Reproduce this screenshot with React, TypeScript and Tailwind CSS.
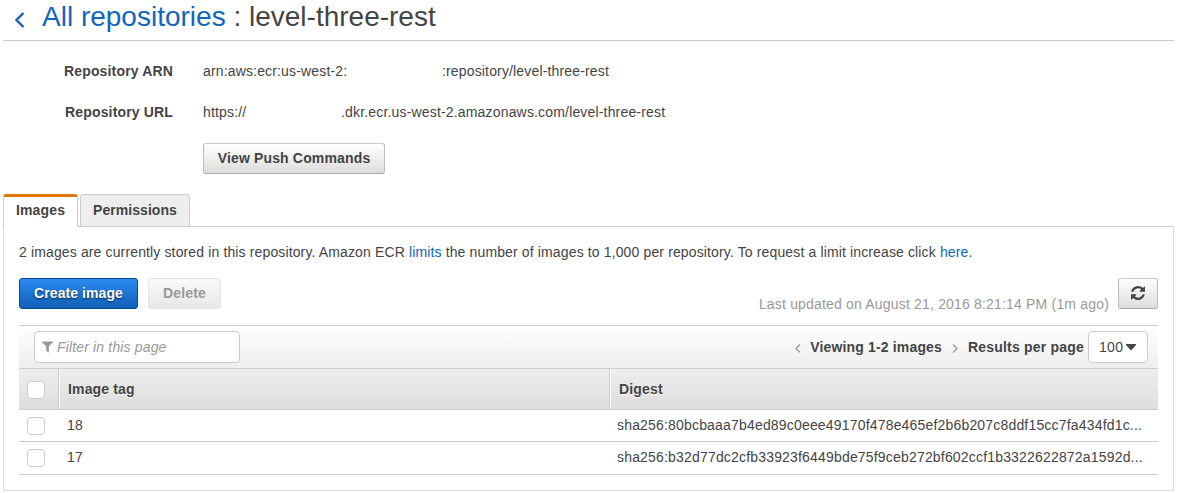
import type { ReactNode } from "react";

const rows = [
  { tag: "18", digest: "sha256:80bcbaaa7b4ed89c0eee49170f478e465ef2b6b207c8ddf15cc7fa434fd1c..." },
  { tag: "17", digest: "sha256:b32d77dc2cfb33923f6449bde75f9ceb272bf602ccf1b3322622872a1592d..." },
];

function Chevron({ className, flip = false }: { className: string; flip?: boolean }) {
  return (
    <svg viewBox="0 0 10 16" className={className} fill="none" stroke="currentColor">
      <path d={flip ? "M1.5 1l7 7-7 7" : "M8.5 1l-7 7 7 7"} />
    </svg>
  );
}

function RefreshIcon() {
  return (
    <svg viewBox="0 0 1536 1536" className="mb-[2px] h-[14px] w-[14px]" fill="currentColor">
      <path d="M1511 928q0 5-1 7-64 268-268 434.500T764 1536q-146 0-282.500-55T238 1324l-129 129q-19 19-45 19t-45-19-19-45V960q0-26 19-45t45-19h448q26 0 45 19t19 45-19 45l-137 137q71 66 161 102t187 36q134 0 250-65t186-179q11-17 53-117 8-23 30-23h192q13 0 22.500 9.500t9.500 22.500zm25-800v448q0 26-19 45t-45 19h-448q-26 0-45-19t-19-45 19-45l138-138Q969 256 768 256q-134 0-250 65T332 500q-11 17-53 117-8 23-30 23H50q-13 0-22.500-9.500T18 608v-7q65-268 270-434.500T768 0q146 0 284 55.500T1297 212l130-129q19-19 45-19t45 19 19 45z" />
    </svg>
  );
}

function FilterIcon() {
  return (
    <svg viewBox="0 0 12 12" className="mr-[4px] h-[12px] w-[11px]" fill="currentColor">
      <path d="M.4 0h11.200q.6.500.1 1L7.500 5.300v6.200q-.3.700-.9.300L4.700 10q-.2-.2-.2-.5V5.300L.3 1Q-.1.500.4 0z" />
    </svg>
  );
}

function Checkbox() {
  return <span role="checkbox" aria-checked="false" className="block h-[18px] w-[18px] rounded border border-[#ccc] bg-white" />;
}

function Detail({ label, children }: { label: string; children: ReactNode }) {
  return (
    <div className="flex h-[41px] items-center">
      <div className="w-[170px] text-right font-bold">{label}</div>
      <div className="ml-[30px] flex whitespace-pre">{children}</div>
    </div>
  );
}

export default function App() {
  return (
    <div className="h-[493px] w-[1179px] overflow-hidden bg-white pl-[3px] font-['Liberation_Sans',Arial,sans-serif] text-[14px] leading-5 tracking-[0.155px] text-[#444]">
      <header className="flex h-[41px] w-[1171px] border-b border-[#ccc] pl-[12px]">
        <Chevron className="mt-[12px] h-[16px] w-[10px] stroke-[2.3px] text-[#1166bb]" />
        <h1 className="ml-[17px] text-[28px] leading-[33px] tracking-normal whitespace-pre">
          <a className="text-[#1166bb]">All repositories</a> : level-three-rest
        </h1>
      </header>

      <section className="pt-[9px]">
        <Detail label="Repository ARN">
          <span className="w-[239px]">arn:aws:ecr:us-west-2:</span>
          <span>:repository/level-three-rest</span>
        </Detail>
        <Detail label="Repository URL">
          <span className="w-[138px]">https://</span>
          <span className="tracking-[0.17px]">.dkr.ecr.us-west-2.amazonaws.com/level-three-rest</span>
        </Detail>
        <button className="mt-[11px] ml-[200px] flex h-[31px] w-[182px] justify-center rounded-[3px] border border-[#bbb] border-t-[#ccc] border-b-[#aaa] bg-linear-to-b from-white to-[#ddd] pt-1 font-bold">
          View Push Commands
        </button>
      </section>

      <nav className="relative mt-5 -mb-px flex gap-[2px]">
        <div className="h-[33px] w-[75px] rounded-t-[3px] border-x border-t-[3px] border-[#ccc] border-t-[#e07700] bg-white pt-[3px] text-center font-bold">Images</div>
        <div className="h-[33px] w-[110px] rounded-t-[3px] border border-[#ccc] bg-[#eee] pt-[5px] text-center font-bold tracking-[0.05px]">Permissions</div>
      </nav>

      <main className="h-[265px] w-[1171px] border border-[#ddd] border-t-[#ccc] px-[15px] pt-[15px]">
        <p className="tracking-[0.134px] whitespace-nowrap">
          2 images are currently stored in this repository. Amazon ECR <a className="text-[#1166bb]">limits</a> the number of images to 1,000 per repository. To request a limit increase click <a className="text-[#1166bb]">here</a>.
        </p>
        <div className="mt-4 flex h-[47px] items-start">
          <button className="flex h-[31px] w-[119px] justify-center rounded-[3px] border border-[#0a4a8a] bg-linear-to-b from-[#2b8af0] to-[#1160b8] pt-1 font-bold tracking-[0.08px] text-white [text-shadow:0_1px_2px_#000a]">Create image</button>
          <button className="ml-[10px] flex h-[31px] w-[73px] justify-center rounded-[3px] border border-[#e4e4e4] bg-linear-to-b from-[#fafafa] to-[#e8e8e8] pt-1 font-bold text-[#999]">Delete</button>
          <span className="mt-4 mr-[9px] ml-auto tracking-[0.18px] text-[#999]">Last updated on August 21, 2016 8:21:14 PM (1m ago)</span>
          <button aria-label="Refresh" className="flex h-[31px] w-[40px] items-center justify-center rounded-[3px] border border-[#bbb] border-t-[#ccc] border-b-[#aaa] bg-linear-to-b from-white to-[#ddd]">
            <RefreshIcon />
          </button>
        </div>

        <div className="flex h-[44px] items-center border-y border-[#ccc] bg-linear-to-b from-white to-[#eee] pr-[10px] pl-[15px]">
          <div className="flex h-[32px] w-[206px] items-center rounded border border-[#ccc] bg-white pl-[7px] text-[#999] italic">
            <FilterIcon />
            Filter in this page
          </div>
          <Chevron className="mt-[3px] ml-auto h-[9px] w-[6px] stroke-[2.3px] text-[#999]" />
          <span className="ml-[9px] font-bold">Viewing 1-2 images</span>
          <Chevron flip className="mt-[3px] ml-[10px] h-[9px] w-[6px] stroke-[2.3px] text-[#999]" />
          <span className="ml-[10px] font-bold tracking-[0.2px]">Results per page</span>
          <div className="ml-[4px] flex h-[32px] w-[60px] items-center rounded border border-[#ccc] bg-white pl-[10px] tracking-[0.3px]">
            100
            <svg viewBox="0 0 10 6" className="ml-[3px] h-[6px] w-[10px]" fill="currentColor"><path d="M0 0h10v1L5.500 6h-1L0 1z" /></svg>
          </div>
        </div>

        <div className="flex h-[41px] items-stretch border-b border-[#ccc] bg-linear-to-b from-[#eee] to-[#ddd] font-bold [text-shadow:0_1px_0_#fff]">
          <div className="flex w-[40px] items-center border-r border-[#ccc] pt-[2px] pl-[8px]"><Checkbox /></div>
          <div className="flex w-[551px] items-center border-r border-l border-r-[#ccc] border-l-white pl-[8px]">Image tag</div>
          <div className="flex flex-1 items-center border-l border-white pl-[8px]">Digest</div>
        </div>
        {rows.map((row, i) => (
          <div key={row.tag} className={i === 0 ? "flex h-[32px] items-center border-b border-[#ccc]" : "flex h-[33px] items-center border-b border-[#ccc]"}>
            <div className="w-[48px] pl-[8px]"><Checkbox /></div>
            <div className="w-[550px] pb-[2px]">{row.tag}</div>
            <div className="pb-[2px] tracking-[0.18px] whitespace-nowrap">{row.digest}</div>
          </div>
        ))}
      </main>
    </div>
  );
}
